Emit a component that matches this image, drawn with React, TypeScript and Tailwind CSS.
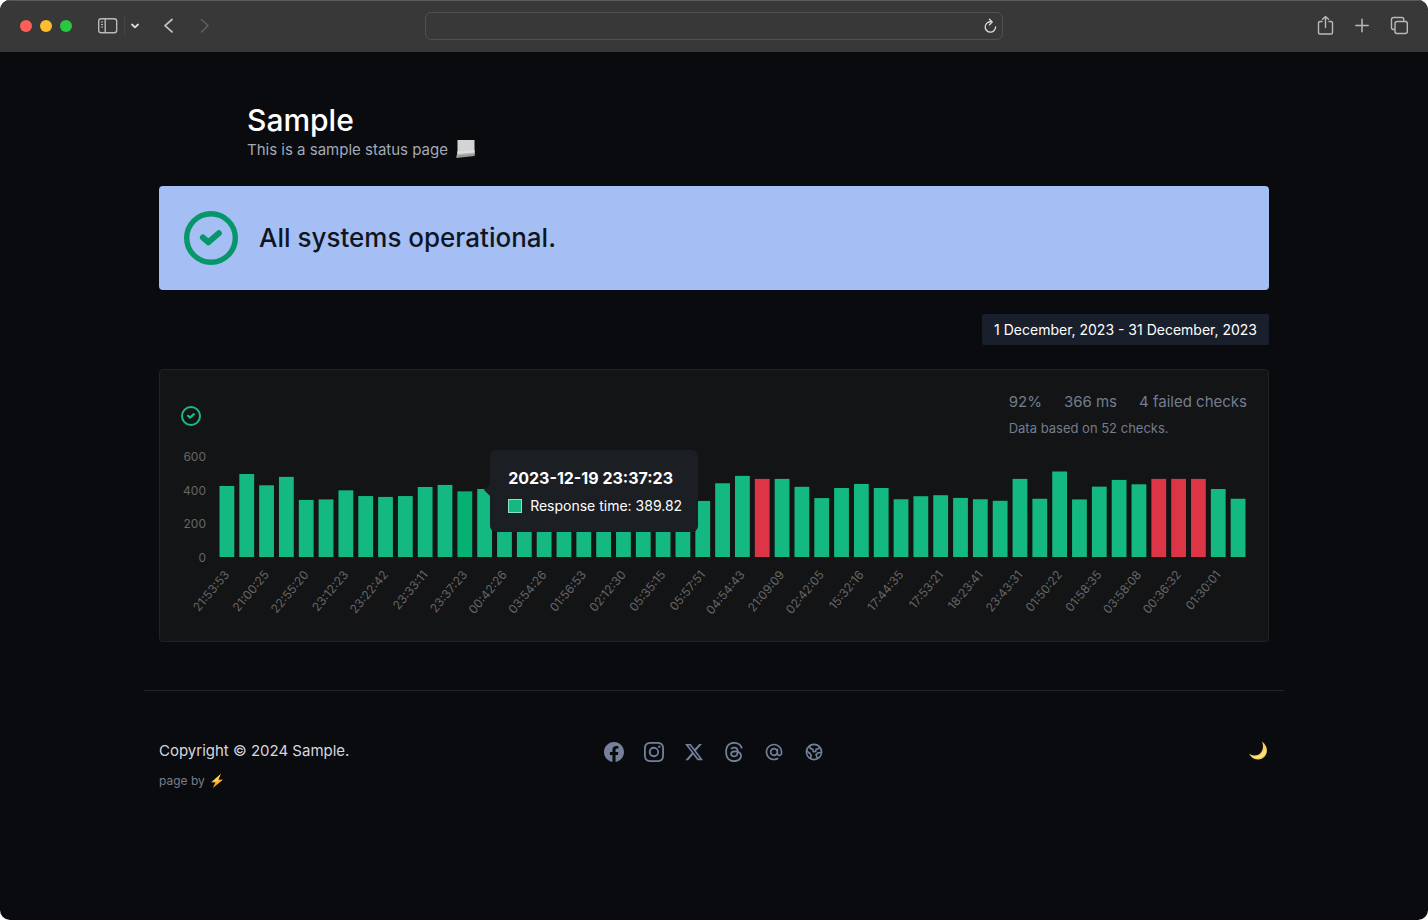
import React from 'react';
import { BsFacebook, BsInstagram, BsThreads } from 'react-icons/bs';
import { FaXTwitter } from 'react-icons/fa6';
import { RiAtLine } from 'react-icons/ri';

const responseTimes = [
  422, 493, 426, 476, 339, 342, 396, 362, 357, 362, 416, 428, 390, 404, 370, 352, 361, 348,
  366, 358, 344, 372, 350, 364, 333, 438, 482, 464, 464, 417, 350, 410, 434, 410, 343, 361,
  367, 351, 343, 334, 464, 346, 508, 342, 418, 458, 432, 464, 464, 464, 404, 346,
];
const failedChecks = [27, 47, 48, 49];
const activeCheck = 12;

const timeLabels = [
  '21:53:53', '21:00:25', '22:55:20', '23:12:23', '23:22:42', '23:33:11', '23:37:23',
  '00:42:26', '03:54:26', '01:56:53', '02:12:30', '05:35:15', '05:57:51', '04:54:43',
  '21:09:09', '02:42:05', '15:32:16', '17:44:35', '17:53:21', '18:23:41', '23:43:31',
  '01:50:22', '01:58:35', '03:58:08', '00:36:32', '01:30:01',
];

const GlobeIcon: React.FC<{ className?: string }> = ({ className }) => (
  <svg className={className} viewBox="0 0 20 20" fill="none" stroke="currentColor" strokeWidth="1.6" strokeLinejoin="round">
    <circle cx="10" cy="10" r="7.6" />
    <path d="M5.800 3.800 6.200 6.500l2.600.8.600 2.500 2.200-.3.500-2.200 2.800-.8.800-1.700" />
    <path d="M2.600 8.800 6 11.500l1.200 2-.8 3" />
    <path d="M17.400 10.500l-3.400.3-2 1.800.8 2.200 1 1.700" />
  </svg>
);

const socialLinks = [
  { name: 'Facebook', Icon: BsFacebook },
  { name: 'Instagram', Icon: BsInstagram },
  { name: 'X', Icon: FaXTwitter },
  { name: 'Threads', Icon: BsThreads },
  { name: 'Email', Icon: RiAtLine },
  { name: 'Website', Icon: GlobeIcon },
];

const CheckIcon: React.FC<{ className: string }> = ({ className }) => (
  <svg className={className} viewBox="0 0 20 20" fill="none" stroke="currentColor" strokeWidth="2">
    <circle cx="10" cy="10" r="9" />
    <path d="M7 9.800 9 11.600l3.900-3.400" strokeWidth="2.200" strokeLinecap="round" strokeLinejoin="round" />
  </svg>
);

const PageEmoji: React.FC = () => (
  <svg className="w-5 h-5" viewBox="0 0 20 20">
    <path d="M1.500 0H18.500v14L1.500 15z" fill="#d4d4d4" />
    <path d="M1.500 12c6 1.500 11-.5 17-1v4.500L.5 17z" fill="#b4b4b4" />
    <path d="M1.500 11c6 1.500 11-.5 17-1v2.500L1.500 14z" fill="#dedede" />
    <path d="M.5 15.500l18-1.500v2L.5 18z" fill="#989898" />
  </svg>
);

const BrowserBar: React.FC = () => (
  <header className="h-13 shrink-0 bg-[#383838] border-t border-[#5a5a5a] px-5 pb-0.5 flex items-center justify-between text-[#b9b9b9]">
    <div className="flex items-center flex-1">
      <div className="flex gap-2">
        <span className="w-3 h-3 rounded-full bg-[#ff5f57]" />
        <span className="w-3 h-3 rounded-full bg-[#febc2e]" />
        <span className="w-3 h-3 rounded-full bg-[#28c840]" />
      </div>
      <button aria-label="Sidebar" className="ml-6">
        <svg className="w-6 h-5" viewBox="0 0 24 20" fill="none" stroke="currentColor" strokeWidth="1.4">
          <rect x="2.700" y="2.700" width="18" height="14" rx="2.500" />
          <path d="M9.200 2.700v14" />
          <path d="M5 6h2M5 8.500h2M5 11h2" strokeWidth="1" />
        </svg>
      </button>
      <span className="ml-1 w-px h-5 bg-[#454545]" />
      <button aria-label="Tab groups" className="ml-1">
        <svg className="w-3 h-5" viewBox="0 0 12 20" fill="none" stroke="#dedede" strokeWidth="1.8" strokeLinecap="round" strokeLinejoin="round">
          <path d="M3 8.500 6 11.300l3-2.800" />
        </svg>
      </button>
      <button aria-label="Back" className="ml-4">
        <svg className="w-5 h-5" viewBox="0 0 20 20" fill="none" stroke="#c4c4c4" strokeWidth="1.700" strokeLinecap="round" strokeLinejoin="round">
          <path d="M15 3.500 8 9.700l7 6.200" />
        </svg>
      </button>
      <button aria-label="Forward" className="ml-4">
        <svg className="w-5 h-5" viewBox="0 0 20 20" fill="none" stroke="#5c5c5c" strokeWidth="1.700" strokeLinecap="round" strokeLinejoin="round">
          <path d="M8.500 3.500 15 9.700l-6.500 6.200" />
        </svg>
      </button>
    </div>
    <div className="w-[578px] h-7 rounded-md border border-[#505050] flex items-center pr-1">
      <input type="text" aria-label="Address" className="flex-1 min-w-0 bg-transparent outline-none px-3 text-sm text-white" />
      <button aria-label="Reload">
        <svg className="w-4 h-4" viewBox="0 0 16 16" fill="none" stroke="#dcdcdc" strokeWidth="1.300" strokeLinecap="round" strokeLinejoin="round">
          <path d="M9.500 3.900A5.200 5.200 0 1 0 13.600 9" />
          <path d="M7.400 1.300 10.200 4 7.500 6.700" />
        </svg>
      </button>
    </div>
    <div className="flex items-center justify-end flex-1 gap-4">
      <button aria-label="Share">
        <svg className="w-5 h-6" viewBox="0 0 20 24" fill="none" stroke="currentColor" strokeWidth="1.400" strokeLinecap="round" strokeLinejoin="round">
          <path d="M6 7.500H4A1.500 1.500 0 0 0 2.500 9v9.500A1.500 1.500 0 0 0 4 20h11a1.500 1.500 0 0 0 1.500-1.500V9A1.500 1.500 0 0 0 15 7.500h-2" />
          <path d="M9.500 13.500V2.500M6.500 5.200l3-2.800 3 2.800" />
        </svg>
      </button>
      <button aria-label="New tab">
        <svg className="w-5 h-5" viewBox="0 0 20 20" fill="none" stroke="currentColor" strokeWidth="1.500" strokeLinecap="round">
          <path d="M10 3.300v12.400M3.800 9.500h12.400" />
        </svg>
      </button>
      <button aria-label="Tab overview">
        <svg className="w-5 h-5" viewBox="0 0 20 20" fill="none" stroke="currentColor" strokeWidth="1.400" strokeLinejoin="round">
          <rect x="7" y="5.500" width="12.300" height="12" rx="2" />
          <path d="M7 13.500H5.500a2 2 0 0 1-2-2v-8a2 2 0 0 1 2-2h8.300a2 2 0 0 1 2 2v2" />
        </svg>
      </button>
    </div>
  </header>
);

const ResponseChart: React.FC = () => {
  const step = 1031 / responseTimes.length;
  const plotLeft = 36;
  const baseline = 108;
  const scale = 101 / 600;

  return (
    <div className="relative">
      <svg className="w-full block" viewBox="0 0 1066 171" fontFamily="Inter, sans-serif">
        {[600, 400, 200, 0].map((tick) => (
          <text key={tick} x="25" y={baseline + 5 - tick * scale} textAnchor="end" fontSize="12" fill="#666666">
            {tick}
          </text>
        ))}
        {responseTimes.map((value, i) => (
          <rect
            key={i}
            x={plotLeft + i * step + 2.5}
            y={baseline - value * scale}
            width="14.8"
            height={value * scale}
            fill={failedChecks.includes(i) ? '#dc3545' : i === activeCheck ? '#05b073' : '#14b881'}
          />
        ))}
        {timeLabels.map((label, i) => {
          const x = plotLeft + i * 2 * step + 13;
          return (
            <text key={label} x={x} y="126" textAnchor="end" fontSize="12" fill="#666666" transform={`rotate(-50 ${x} 126)`}>
              {label}
            </text>
          );
        })}
      </svg>
      <div className="absolute left-[29%] top-px w-52 rounded-md bg-[#1b1e23] px-[18px] pt-4 pb-3.5 text-white">
        <span className="absolute -left-1.5 top-8.5 border-y-6 border-r-6 border-y-transparent border-r-[#1b1e23]" />
        <p className="font-bold text-base leading-6 whitespace-nowrap">2023-12-19 23:37:23</p>
        <p className="mt-1 flex items-center gap-2 text-sm leading-6 whitespace-nowrap">
          <span className="w-3.5 h-3.5 shrink-0 bg-[#14b881] border border-[#8fe0c2]" />
          Response time: 389.82
        </p>
      </div>
    </div>
  );
};

const StatusCard: React.FC = () => (
  <section className="mt-6 rounded border border-[#202225] bg-[#131416] px-[21px] pt-5 pb-[21px]">
    <div className="flex justify-between items-start h-[59px] text-[#747d8e]">
      <CheckIcon className="w-5 h-5 mt-4 text-[#1abc86]" />
      <div>
        <div className="flex gap-[22px] text-[15px] leading-6">
          <span>92%</span>
          <span>366 ms</span>
          <span>4 failed checks</span>
        </div>
        <p className="mt-1 text-[13px] leading-5">Data based on 52 checks.</p>
      </div>
    </div>
    <ResponseChart />
  </section>
);

const Footer: React.FC = () => (
  <footer className="mt-12 border-t border-[#222428]">
    <div className="grid grid-cols-3 px-[15px] pt-12">
      <div>
        <p className="text-[15px] leading-6 text-[#d5d9df]">Copyright © 2024 Sample.</p>
        <p className="mt-2 flex items-center gap-1 text-xs leading-5 text-[#777e8a]">
          page by
          <svg className="w-4 h-4" viewBox="0 0 16 16">
            <path d="M11.800 1 2 9.200l4.500.3L3.800 15 14 6.800l-4.700-.3z" fill="#fbb024" />
            <path d="M11.800 1 4 8.300l4.300.3z" fill="#fdd663" />
          </svg>
        </p>
      </div>
      <nav className="flex justify-center items-center gap-5 h-[26px] text-[#75809a]">
        {socialLinks.map(({ name, Icon }) => (
          <a key={name} href="#" aria-label={name}>
            <Icon className="w-5 h-5" />
          </a>
        ))}
      </nav>
      <div className="flex justify-end items-start">
        <button aria-label="Toggle dark mode">
          <svg className="w-6 h-6" viewBox="0 0 24 24">
            <path d="M17 2.500C25 8 23 20 13 20.500 9 20.700 6 18.500 4 14.500 7 17 12 17.500 15.500 14 18.500 10.500 18.500 6 17 2.500z" fill="#f5cf57" />
            <path d="M20.500 7c1.500 5-1 11-6.500 12-3 .5-5.500-.5-7.500-2 4 1.200 8.500.5 11-2.500 2-2.300 3-4.500 3-7.500z" fill="#fbe38a" />
          </svg>
        </button>
      </div>
    </div>
  </footer>
);

const App: React.FC = () => {
  return (
    <div className="min-h-screen bg-white font-['Inter',sans-serif]">
      <div className="min-h-screen flex flex-col rounded-[10px] overflow-hidden bg-[#090b0f]">
        <BrowserBar />
        <div className="w-full max-w-[1140px] mx-auto pt-12 pb-12">
          <main className="px-[15px]">
            <div className="pl-22 pt-0.5">
              <h1 className="text-3xl leading-9 font-medium text-white">Sample</h1>
              <p className="flex items-center gap-2 text-[15px] leading-6 text-[#a3aab6]">
                This is a sample status page
                <PageEmoji />
              </p>
            </div>
            <div className="mt-6 h-26 rounded bg-[#a5bff5] px-[25px] flex items-center gap-[21px]">
              <CheckIcon className="w-[54px] h-[54px] text-[#059669]" />
              <h2 className="text-[26px] leading-9 font-medium text-[#10161f]">All systems operational.</h2>
            </div>
            <div className="mt-6 flex justify-end">
              <button className="rounded-xs bg-[#1a202b] px-3 h-[31px] text-sm leading-5 text-white">
                1 December, 2023 - 31 December, 2023
              </button>
            </div>
            <StatusCard />
          </main>
          <Footer />
        </div>
      </div>
    </div>
  );
};

export default App;
